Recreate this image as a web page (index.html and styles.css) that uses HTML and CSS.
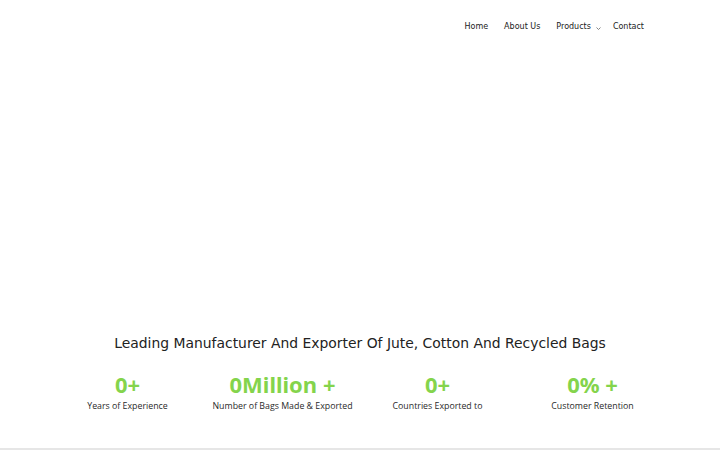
FILE: index.html
```html
<html>
<head>
<title>Jute Bags</title>
<link rel="stylesheet" href="styles.css">
</head>
<body>
<div class="header">
	<ul class="menu">
		<li><a href="#">Home</a></li>
		<li><a href="#">About Us</a></li>
		<li><a href="#">Products<svg class="caret" width="5" height="3" viewBox="0 0 5 3"><path d="M0.5 0.5 L2.5 2.5 L4.5 0.5" fill="none" stroke="#777" stroke-width="0.9"/></svg></a></li>
		<li><a href="#">Contact</a></li>
	</ul>
</div>
<div class="banner"></div>
<div class="intro">
	<h2 class="lead">Leading Manufacturer And Exporter Of Jute, Cotton And Recycled Bags</h2>
	<div class="stats">
		<div class="stat">
			<div class="num">0+</div>
			<div class="label">Years of Experience</div>
		</div>
		<div class="stat">
			<div class="num">0Million +</div>
			<div class="label">Number of Bags Made &amp; Exported</div>
		</div>
		<div class="stat">
			<div class="num">0+</div>
			<div class="label">Countries Exported to</div>
		</div>
		<div class="stat">
			<div class="num">0% +</div>
			<div class="label">Customer Retention</div>
		</div>
	</div>
</div>
<div class="rule"></div>
</body>
</html>
```

FILE: styles.css
```css
body { margin:0; font-family:"DejaVu Sans", sans-serif; background:#fff; color:#222; }
.header { display:flex; justify-content:flex-end; padding:14px 76px 0 0; height:36px; }
.menu { list-style:none; margin:0; padding:0; display:flex; gap:16px; }
.menu a { font-size:8px; color:#222; text-decoration:none; }
.caret { margin:0 -4px -1px 5px; vertical-align:baseline; }
.banner { height:281px; }
.intro { display:flex; flex-direction:column; align-items:center; }
.lead { margin:0; font-size:13.9px; font-weight:normal; color:#222; line-height:24px; }
.stats { display:grid; grid-template-columns:repeat(4, 155px); margin-top:15px; }
.stat { text-align:center; }
.num { font-family:"Noto Sans", sans-serif; font-weight:bold; font-size:22px; color:#84d44c; line-height:28px; }
.label { font-family:"Open Sans", sans-serif; font-size:8.8px; color:#2a2a2a; margin-top:2px; }
.rule { margin-top:36px; height:3px; background:#e6e6e6; }
```
